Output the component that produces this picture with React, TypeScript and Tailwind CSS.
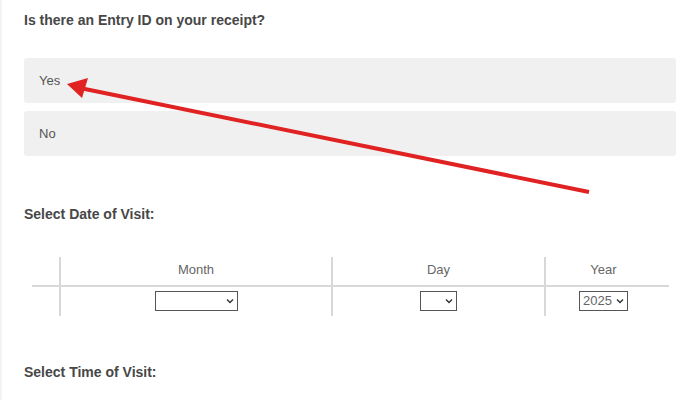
import React from "react"

const font = { fontFamily: '"Liberation Sans", Arial, sans-serif' }

function Arrow() {
  // red annotation arrow pointing at "Yes"
  return (
    <svg className="pointer-events-none absolute left-0 top-0" width="700" height="400" viewBox="0 0 700 400">
      <line x1="589" y1="192" x2="80" y2="88" stroke="#e02222" strokeWidth="4" />
      <polygon points="67,84 88,78 82,98" fill="#e02222" />
    </svg>
  )
}

function Select({ value, className }: { value?: string; className: string }) {
  return (
    <div
      className={`flex h-[20px] items-center justify-end border border-[#555] bg-white pr-[3px] text-[13px] text-[#666] ${className}`}
    >
      {value && <span className="mr-[4px]">{value}</span>}
      <svg width="8" height="6" viewBox="0 0 8 6">
        <path d="M1 1.5 L4 4.5 L7 1.5" fill="none" stroke="#333" strokeWidth="1.4" />
      </svg>
    </div>
  )
}

export default function App() {
  return (
    <div className="relative h-[400px] w-[700px] overflow-hidden bg-white" style={font}>
      <div className="h-full border-l-2 border-[#f3f3f3] pl-[22px] pr-[24px]">
        <h2 className="pt-[12px] text-[14px] font-bold leading-[16px] text-[#474747]">
          Is there an Entry ID on your receipt?
        </h2>

        <div className="mt-[30px] flex flex-col gap-[8px]">
          <div className="flex h-[45px] items-center rounded-[3px] bg-[#f0f0f0] pl-[15px] text-[13px] text-[#555]">
            Yes
          </div>
          <div className="flex h-[45px] items-center rounded-[3px] bg-[#f0f0f0] pl-[15px] text-[13px] text-[#555]">
            No
          </div>
        </div>

        <h3 className="mt-[50px] text-[14px] font-bold leading-[16px] text-[#474747]">Select Date of Visit:</h3>

        <div className="ml-[8px] mt-[35px] grid w-[637px] grid-cols-[27px_272px_213px_125px]">
          <div className="h-[30px] border-b-2 border-[#d8d8d8]" />
          <div className="flex h-[30px] items-center justify-center border-b-2 border-l-2 border-[#d8d8d8] pb-[3px] text-[13px] text-[#666]">
            Month
          </div>
          <div className="flex h-[30px] items-center justify-center border-b-2 border-l-2 border-[#d8d8d8] pb-[3px] text-[13px] text-[#666]">
            Day
          </div>
          <div className="flex h-[30px] items-center justify-center border-b-2 border-l-2 border-[#d8d8d8] pb-[3px] pr-[8px] text-[13px] text-[#666]">
            Year
          </div>

          <div className="h-[29px]" />
          <div className="flex h-[29px] items-start justify-center border-l-2 border-[#d8d8d8] pt-[4px]">
            <Select className="w-[83px]" />
          </div>
          <div className="flex h-[29px] items-start justify-center border-l-2 border-[#d8d8d8] pt-[4px]">
            <Select className="w-[37px]" />
          </div>
          <div className="flex h-[29px] items-start justify-center border-l-2 border-[#d8d8d8] pr-[8px] pt-[4px]">
            <Select value="2025" className="w-[49px]" />
          </div>
        </div>

        <h3 className="mt-[48px] text-[14px] font-bold leading-[16px] text-[#474747]">Select Time of Visit:</h3>
      </div>
      <Arrow />
    </div>
  )
}
